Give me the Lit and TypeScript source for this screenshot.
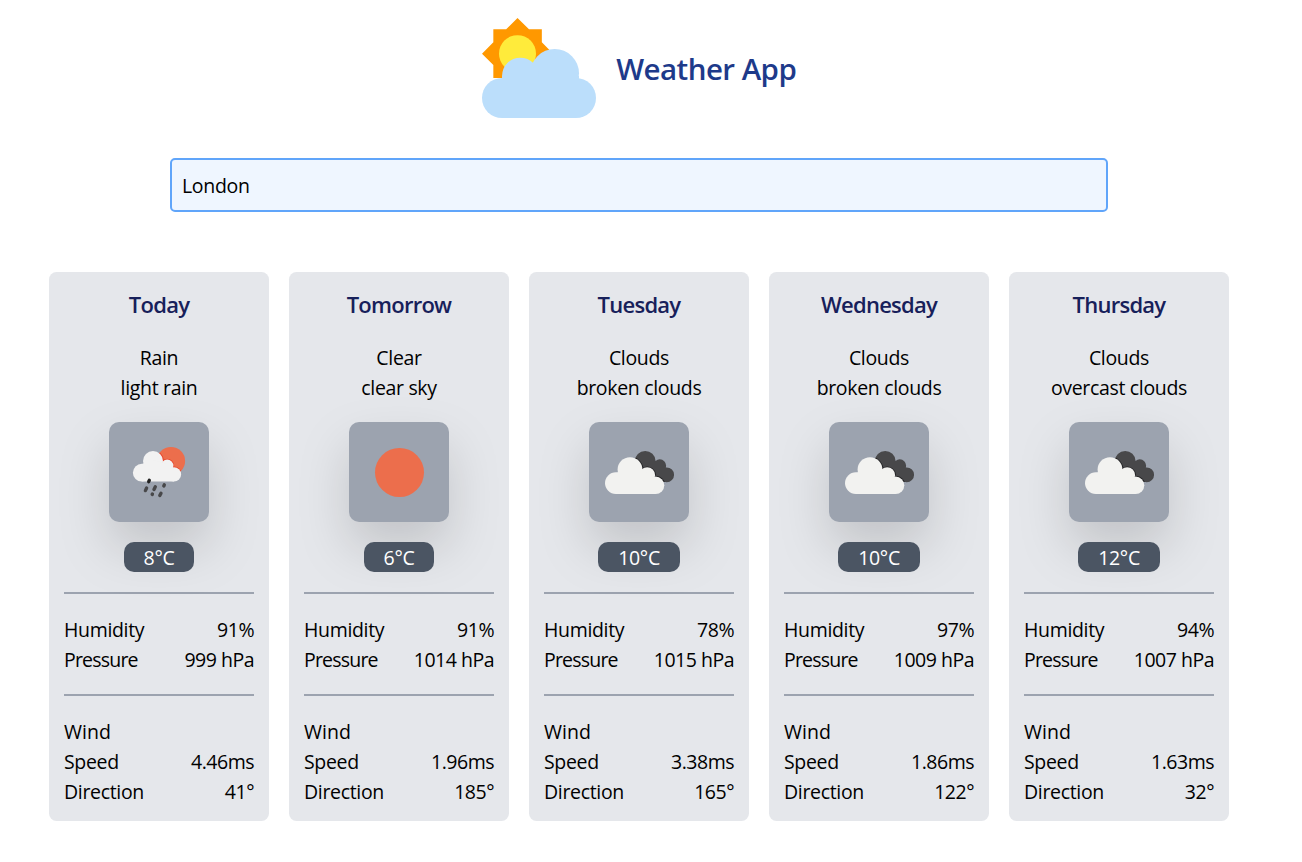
import { LitElement, html, css, svg } from "lit";
import { customElement, property, state } from "lit/decorators.js";

type Icon = "rain" | "clear" | "clouds";

interface Day {
  name: string;
  main: string;
  detail: string;
  icon: Icon;
  temp: number;
  humidity: number;
  pressure: number;
  speed: number;
  direction: number;
}

const days: Day[] = [
  { name: "Today", main: "Rain", detail: "light rain", icon: "rain", temp: 8, humidity: 91, pressure: 999, speed: 4.46, direction: 41 },
  { name: "Tomorrow", main: "Clear", detail: "clear sky", icon: "clear", temp: 6, humidity: 91, pressure: 1014, speed: 1.96, direction: 185 },
  { name: "Tuesday", main: "Clouds", detail: "broken clouds", icon: "clouds", temp: 10, humidity: 78, pressure: 1015, speed: 3.38, direction: 165 },
  { name: "Wednesday", main: "Clouds", detail: "broken clouds", icon: "clouds", temp: 10, humidity: 97, pressure: 1009, speed: 1.86, direction: 122 },
  { name: "Thursday", main: "Clouds", detail: "overcast clouds", icon: "clouds", temp: 12, humidity: 94, pressure: 1007, speed: 1.63, direction: 32 },
];

const smallCloud = svg`
  <circle cx="32.8" cy="50.7" r="8.9"/><circle cx="44" cy="39" r="10"/>
  <circle cx="58.2" cy="43.8" r="6.2"/><circle cx="64.9" cy="52.4" r="7.2"/>
  <path d="M32.8 42 44 38 58 42 65 50V59.6H32.8z"/>`;

const bigCloud = svg`
  <circle cx="26.9" cy="61.1" r="10.9"/><circle cx="41" cy="47.6" r="12.4"/>
  <circle cx="58.2" cy="53.2" r="7.9"/><circle cx="66.6" cy="63.3" r="8.7"/>
  <path d="M26.9 51 41 46 58 51 66.6 60V72H26.9z"/>`;

const pictures = {
  rain: svg`
    <defs><clipPath id="sun"><circle cx="62" cy="39" r="14.1"/></clipPath></defs>
    <circle cx="62" cy="39" r="14.1" fill="#ec6e4c"/>
    <g clip-path="url(#sun)"><g fill="#e8452a" stroke="#e8452a" stroke-width="1.6">${smallCloud}</g></g>
    <g fill="#f2f2f2">${smallCloud}</g>
    <g stroke="#48484a" stroke-width="3.4" stroke-linecap="round">
      <path stroke="#222" d="M40.3 58.3 39.7 59.7"/>
      <path d="M37.6 66 36.4 68.6M46.3 64.8 45 67.4M55.3 62.8 54.8 64M43.4 72 43.2 72.5M52 71.2 50.8 73.6"/>
    </g>`,
  clear: svg`<circle cx="50.5" cy="50.5" r="24.5" fill="#ec6e4c"/>`,
  clouds: svg`
    <defs><clipPath id="dark">
      <circle cx="56.2" cy="39.3" r="10.4"/><circle cx="70.8" cy="43.6" r="6.3"/><circle cx="77.7" cy="52.8" r="7.4"/>
      <path d="M56 38 70 42 77 50V60.1H60L50 46z"/></clipPath></defs>
    <g clip-path="url(#dark)">
      <path fill="#48484a" d="M0 0H100V100H0z"/>
      <g fill="#1c1c1e" stroke="#1c1c1e" stroke-width="1.6">${bigCloud}</g>
    </g>
    <g fill="#f2f2f0">${bigCloud}</g>`,
};

@customElement("weather-card")
class WeatherCard extends LitElement {
  @property({ attribute: false }) day!: Day;

  static styles = css`
    :host {
      display: flex;
      flex-direction: column;
      box-sizing: border-box;
      height: 549px;
      padding: 15px;
      border-radius: 7.5px;
      background: #e5e7eb;
    }
    .name {
      margin: 0;
      height: 35px;
      line-height: 35px;
      font-size: 22px;
      font-weight: 560;
      letter-spacing: -0.75px;
      text-align: center;
      color: #17205a;
    }
    .sky {
      padding-top: 21px;
      text-align: center;
    }
    .tile {
      align-self: center;
      width: 100px;
      height: 100px;
      margin: 19px 0 20px;
      border-radius: 10px;
      background: #9ca3af;
      filter: drop-shadow(0 25px 25px rgba(0, 0, 0, 0.15));
    }
    .tile svg {
      display: block;
    }
    .temp {
      align-self: center;
      padding: 0 20px;
      height: 30px;
      line-height: 32px;
      border-radius: 10px;
      background: #4b5563;
      color: #fff;
      font-weight: 440;
      letter-spacing: -0.3px;
      position: relative;
    }
    .group {
      margin-top: 20px;
      padding-top: 21px;
      border-top: 2px solid #9ca3af;
    }
    .group + .group {
      margin-top: 19px;
    }
    .row {
      display: flex;
      justify-content: space-between;
      height: 30px;
    }
    .tight {
      letter-spacing: -0.8px;
    }
    .value {
      letter-spacing: -0.5px;
    }
    .wind {
      letter-spacing: 0;
    }
  `;

  render() {
    const d = this.day;
    return html`
      <h2 class="name">${d.name}</h2>
      <div class="sky"><div>${d.main}</div><div>${d.detail}</div></div>
      <div class="tile"><svg width="100" height="100" viewBox="0 0 100 100">${pictures[d.icon]}</svg></div>
      <div class="temp">${d.temp}°C</div>
      <div class="group">
        <div class="row"><span>Humidity</span><span class="value">${d.humidity}%</span></div>
        <div class="row"><span class="tight">Pressure</span><span class="value">${d.pressure} hPa</span></div>
      </div>
      <div class="group">
        <div class="row"><span class="wind">Wind</span></div>
        <div class="row"><span>Speed</span><span class="value">${d.speed}ms</span></div>
        <div class="row"><span>Direction</span><span class="value">${d.direction}°</span></div>
      </div>
    `;
  }
}

@customElement("app-root")
class AppRoot extends LitElement {
  @state() private city = "London";

  static styles = css`
    :host {
      display: block;
      box-sizing: border-box;
      width: 1278px;
      height: 862px;
      padding-top: 18px;
      background: #fff;
      color: #000;
      font: 370 19.5px/30px "Open Sans", "Noto Sans", sans-serif;
      letter-spacing: -0.33px;
    }
    .header {
      display: flex;
      align-items: center;
      justify-content: center;
      gap: 20.5px;
    }
    .title {
      margin: 0;
      padding-top: 1px;
      font-size: 29.5px;
      line-height: 40px;
      font-weight: 560;
      letter-spacing: -0.55px;
      color: #1e3a8a;
    }
    .search {
      display: block;
      box-sizing: border-box;
      width: 938px;
      height: 54px;
      margin: 40px auto 60px;
      padding: 0 10px;
      border: 2px solid #60a5fa;
      border-radius: 5px;
      background: #eff6ff;
      color: inherit;
      font: inherit;
      letter-spacing: inherit;
      outline: none;
    }
    .cards {
      display: grid;
      grid-template-columns: repeat(5, 220px);
      justify-content: center;
      gap: 20px;
    }
  `;

  render() {
    return html`
      <header class="header">
        <svg width="114" height="100" viewBox="36 24 342 300">
          <path fill="#ff9800" d="M142.500 24 177 58H215.500V97L249.500 131 215.500 165V204H70V165L36 131 70 97V58H108.500z"/>
          <circle cx="142.500" cy="131" r="55.500" fill="#ffeb3b"/>
          <g fill="#bbdefb">
            <circle cx="96" cy="264" r="60"/><circle cx="318" cy="264" r="60"/>
            <circle cx="254" cy="190" r="73"/><circle cx="151" cy="198" r="55"/>
            <path d="M96 198H327V264H318V324H96z"/>
          </g>
        </svg>
        <h1 class="title">Weather App</h1>
      </header>
      <input class="search" .value=${this.city}
        @input=${(e: Event) => (this.city = (e.target as HTMLInputElement).value)} />
      <main class="cards">${days.map((d) => html`<weather-card .day=${d}></weather-card>`)}</main>
    `;
  }
}
